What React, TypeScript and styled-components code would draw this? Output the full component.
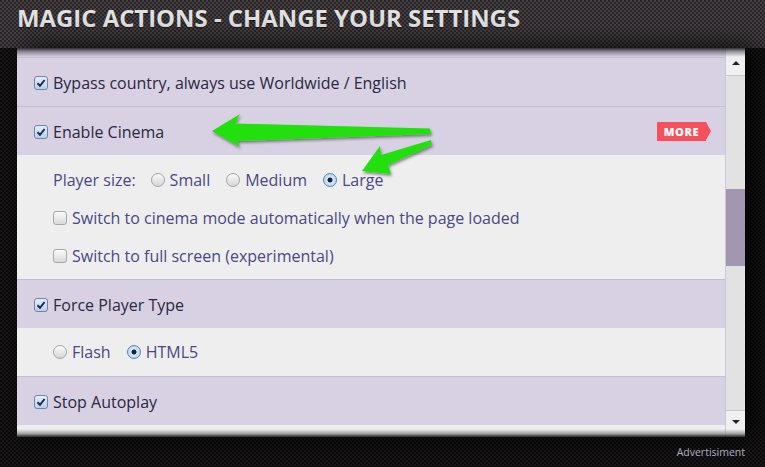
import { createGlobalStyle, styled } from 'styled-components';

const GlobalStyle = createGlobalStyle`
  html, body {
    margin: 0;
    padding: 0;
    background: #0e0c0d;
  }
  body {
    font-family: 'Open Sans', 'DejaVu Sans', sans-serif;
  }
`;

export default function App() {
  return (
    <>
      <GlobalStyle />
      <Page>
        <Header>
          <Title>MAGIC ACTIONS - CHANGE YOUR SETTINGS</Title>
        </Header>
        <Main>
          <Panel>
            <List>
              <TopStrip />
              <Row $divider>
                <Check checked />
                <RowLabel>Bypass country, always use Worldwide / English</RowLabel>
              </Row>
              <Row>
                <Check checked />
                <RowLabel>Enable Cinema</RowLabel>
                <More>MORE</More>
              </Row>
              <Sub $height={124}>
                <SubLine>
                  <SubLabel>Player size:</SubLabel>
                  <Option><Radio /><span>Small</span></Option>
                  <Option><Radio /><span>Medium</span></Option>
                  <Option><Radio checked /><span>Large</span></Option>
                </SubLine>
                <SubLine>
                  <Check />
                  <SubText>Switch to cinema mode automatically when the page loaded</SubText>
                </SubLine>
                <SubLine>
                  <Check />
                  <SubText>Switch to full screen (experimental)</SubText>
                </SubLine>
              </Sub>
              <Row>
                <Check checked />
                <RowLabel>Force Player Type</RowLabel>
              </Row>
              <Sub $height={48}>
                <SubLine>
                  <Option><Radio /><span>Flash</span></Option>
                  <Option><Radio checked /><span>HTML5</span></Option>
                </SubLine>
              </Sub>
              <Row>
                <Check checked />
                <RowLabel>Stop Autoplay</RowLabel>
              </Row>
            </List>
            <Scrollbar>
              <ScrollButton $up>
                <Triangle $up />
              </ScrollButton>
              <Track>
                <Thumb />
              </Track>
              <ScrollButton>
                <Triangle />
              </ScrollButton>
            </Scrollbar>
            <ShadeTop />
            <ShadeBottom />
          </Panel>
        </Main>
        <Footer>Advertisiment</Footer>
        <Arrows viewBox="0 0 765 467" width="765" height="467">
          <defs>
            <filter id="sh" x="-10%" y="-50%" width="120%" height="200%">
              <feDropShadow dx="1" dy="2" stdDeviation="1.5" floodColor="#000" floodOpacity="0.45" />
            </filter>
          </defs>
          <g fill="#22e010" filter="url(#sh)">
            <polygon points="212,131 240,114 235,123.5 430,128.5 431,134 237,141 240,147" />
            <polygon points="362,171 380,146 381,155 431,140 432,145 388,165 391,174" />
          </g>
        </Arrows>
      </Page>
    </>
  );
}

function Check({ checked }: { checked?: boolean }) {
  return (
    <CheckBox $checked={!!checked}>
      {checked && (
        <svg width="10" height="10" viewBox="0 0 10 10">
          <path d="M1.5 5.2 L4 7.8 L8.6 2" stroke="#1e2a4a" strokeWidth="2" fill="none" />
        </svg>
      )}
    </CheckBox>
  );
}

function Radio({ checked }: { checked?: boolean }) {
  return <RadioDot $checked={!!checked} />;
}

const checker = (a: string, b: string) =>
  `repeating-conic-gradient(${a} 0 25%, ${b} 0 50%) 0 0 / 4px 4px`;

const Page = styled.div`
  position: relative;
  width: 765px;
  height: 467px;
  overflow: hidden;
  background: ${checker('#1a1819', '#0b0a0a')};
  display: flex;
  flex-direction: column;
`;

const Header = styled.div`
  height: 48px;
  flex: none;
  padding-left: 17px;
  box-sizing: border-box;
  background: ${checker('#443f42', '#2b2729')};
`;

const Title = styled.h1`
  margin: 0;
  padding-top: 1px;
  font-family: 'Open Sans', sans-serif;
  font-weight: 700;
  font-size: 23.9px;
  line-height: 34px;
  color: #e2e2e2;
  text-shadow: 0 1px 1px rgba(0, 0, 0, 0.6);
`;

const Main = styled.div`
  display: flex;
  padding-left: 17px;
`;

const Panel = styled.div`
  position: relative;
  display: flex;
  width: 728px;
  height: 389px;
  background: #eeeeee;
  box-shadow: 8px 0 26px rgba(0, 0, 0, 0.95);
`;

const List = styled.div`
  width: 708px;
  display: flex;
  flex-direction: column;
  overflow: hidden;
`;

const TopStrip = styled.div`
  height: 9px;
  flex: none;
  background: #d8d1e3;
  border-bottom: 1px solid #c5bdd1;
`;

const Row = styled.div<{ $divider?: boolean }>`
  flex: none;
  box-sizing: border-box;
  display: flex;
  align-items: center;
  padding: 2px 16px 0 17px;
  background: #d8d1e3;
  border-bottom: ${(p) => (p.$divider ? '1px solid #c5bdd1' : 'none')};
  height: ${(p) => (p.$divider ? '49px' : '48px')};
`;

const RowLabel = styled.span`
  margin-left: 5px;
  font-size: 16px;
  color: #2a2841;
  flex: 1;
`;

const More = styled.span`
  position: relative;
  height: 19px;
  width: 49px;
  margin: -2px 3px 0 0;
  background: #f5505c;
  color: #fff;
  font-weight: 800;
  font-size: 11px;
  letter-spacing: 0.6px;
  display: flex;
  align-items: center;
  justify-content: center;
  &::after {
    content: '';
    position: absolute;
    right: -5px;
    top: 0;
    border-left: 5px solid #f5505c;
    border-top: 9.5px solid transparent;
    border-bottom: 9.5px solid transparent;
  }
`;

const Sub = styled.div<{ $height: number }>`
  flex: none;
  height: ${(p) => p.$height + 1}px;
  box-sizing: border-box;
  padding: ${(p) => (p.$height > 60 ? '6px' : '5px')} 0 0 36px;
  background: #eeeeee;
  border-bottom: 1px solid #c5bdd1;
`;

const SubLine = styled.div`
  height: 38px;
  display: flex;
  align-items: center;
  font-size: 16px;
  color: #4a4884;
`;

const SubLabel = styled.span`
  margin-right: 15px;
`;

const SubText = styled.span`
  margin-left: 5px;
`;

const Option = styled.label`
  display: flex;
  align-items: center;
  gap: 5px;
  margin-right: 16px;
`;

const CheckBox = styled.span<{ $checked: boolean }>`
  flex: none;
  width: 14px;
  height: 14px;
  box-sizing: border-box;
  border-radius: 3px;
  display: flex;
  align-items: center;
  justify-content: center;
  border: 1px solid ${(p) => (p.$checked ? '#6f86a8' : '#a9a9a9')};
  background: ${(p) =>
    p.$checked
      ? 'linear-gradient(#e4eefa, #b9d0ea)'
      : 'linear-gradient(#fbfbfb, #d9d9d9)'};
`;

const RadioDot = styled.span<{ $checked: boolean }>`
  flex: none;
  width: 14px;
  height: 14px;
  box-sizing: border-box;
  border-radius: 50%;
  border: 1px solid ${(p) => (p.$checked ? '#4f86bd' : '#a3a3a3')};
  background: ${(p) =>
    p.$checked
      ? 'radial-gradient(circle at 50% 50%, #1a2236 0 2.2px, #d5e8f8 2.8px, #a9cbec 100%)'
      : 'linear-gradient(#fafafa, #d6d6d6)'};
`;

const Scrollbar = styled.div`
  width: 20px;
  display: flex;
  flex-direction: column;
  background: #e2e2e2;
  border-left: 1px solid #cdc7d5;
  box-sizing: border-box;
`;

const ScrollButton = styled.div<{ $up?: boolean }>`
  height: ${(p) => (p.$up ? '28px' : '27px')};
  flex: none;
  display: flex;
  justify-content: center;
  align-items: flex-start;
  padding-top: ${(p) => (p.$up ? '13px' : '9px')};
  box-sizing: border-box;
  background: #f0f0f0;
  ${(p) => (p.$up ? 'border-bottom: 1px solid #c9c3d1;' : 'border-top: 1px solid #c9c3d1;')}
`;

const Triangle = styled.span<{ $up?: boolean }>`
  width: 0;
  height: 0;
  border-left: 4px solid transparent;
  border-right: 4px solid transparent;
  ${(p) => (p.$up ? 'border-bottom: 4px solid #222;' : 'border-top: 4px solid #222;')}
`;

const Track = styled.div`
  flex: 1;
  padding-top: 113px;
`;

const Thumb = styled.div`
  height: 77px;
  background: #a297b0;
`;

const ShadeTop = styled.div`
  position: absolute;
  left: 0;
  right: 0;
  top: 0;
  height: 9px;
  background: linear-gradient(rgba(40, 36, 44, 0.95), rgba(60, 56, 66, 0.5) 40%, rgba(216, 209, 227, 0));
`;

const ShadeBottom = styled.div`
  position: absolute;
  left: 0;
  right: 0;
  bottom: 0;
  height: 8px;
  background: linear-gradient(rgba(238, 238, 238, 0), rgba(120, 120, 120, 0.6) 55%, rgba(30, 30, 30, 0.95));
`;

const Footer = styled.div`
  width: 745px;
  text-align: right;
  padding-top: 8px;
  font-family: 'Open Sans', sans-serif;
  font-size: 10.5px;
  color: #c4c3da;
`;

const Arrows = styled.svg`
  position: absolute;
  left: 0;
  top: 0;
  pointer-events: none;
`;
